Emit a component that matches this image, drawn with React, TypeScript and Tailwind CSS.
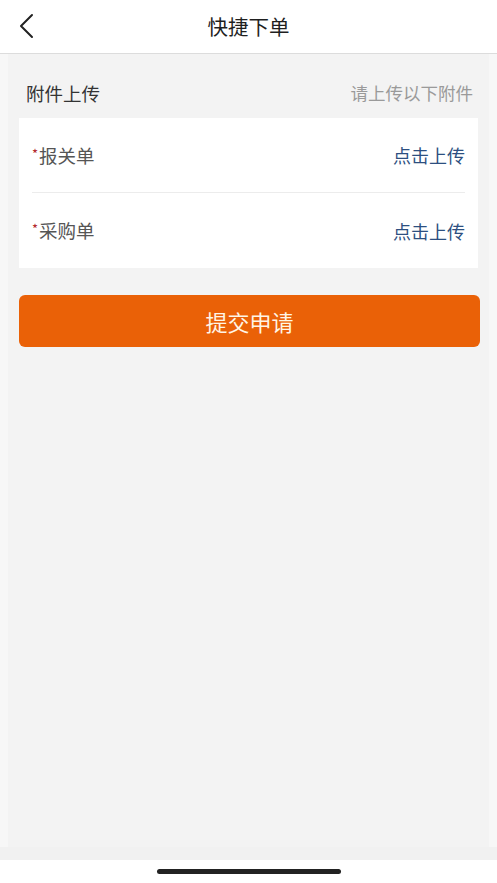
const font = { fontFamily: '"Noto Sans CJK SC", "Noto Sans", sans-serif' };

function UploadRow({ label, last }: { label: string; last?: boolean }) {
  return (
    <div className={`mx-[13px] flex h-[75px] items-center justify-between ${last ? "" : "border-b border-[#ececec]"}`}>
      <div className="flex items-center text-[18.5px] leading-none text-[#555555]">
        <span className="mr-[1px] -mt-[4px] text-[13px] text-[#b3272c]">*</span>
        {label}
      </div>
      <button type="button" className="text-[18px] leading-none text-[#2d4f80]">
        点击上传
      </button>
    </div>
  );
}

export default function App() {
  return (
    <div className="flex h-[883px] w-full flex-col bg-white" style={font}>
      <header className="relative flex h-[54px] shrink-0 items-center justify-center border-b border-[#dcdcdc] bg-white">
        <button type="button" className="absolute left-[14px] top-[11px] text-[#222]">
          <svg width="24" height="30" viewBox="0 0 24 30" fill="none">
            <polyline points="18,4 7,15 18,26" stroke="currentColor" strokeWidth="2" strokeLinecap="round" strokeLinejoin="round" />
          </svg>
        </button>
        <h1 className="text-[20.5px] font-normal text-[#1f1f1f]">快捷下单</h1>
      </header>

      <div className="flex flex-1 flex-col bg-[#f7f7f7]">
        <main className="mx-[8px] flex-1 bg-[#f3f3f3] px-[11px]">
          <div className="flex h-[64px] items-center justify-between pl-[7px] pr-[5px] pt-[15px]">
            <span className="text-[18.5px] text-[#333333]">附件上传</span>
            <span className="text-[17.5px] text-[#9a9a9a]">请上传以下附件</span>
          </div>

          <div className="w-[459px] bg-white">
            <UploadRow label="报关单" />
            <UploadRow label="采购单" last />
          </div>

          <button
            type="button"
            className="mt-[27px] flex h-[52px] w-[461px] items-center justify-center rounded-[6px] bg-[#ea6107] text-[22px] text-[#fff5e6]"
          >
            提交申请
          </button>
        </main>
        <div className="h-[13px] shrink-0 bg-[#f1f1f1]" />
        <div className="flex h-[23px] shrink-0 justify-center bg-white pt-[9px]">
          <div className="h-[5px] w-[184px] rounded-full bg-[#222]" />
        </div>
      </div>
    </div>
  );
}
